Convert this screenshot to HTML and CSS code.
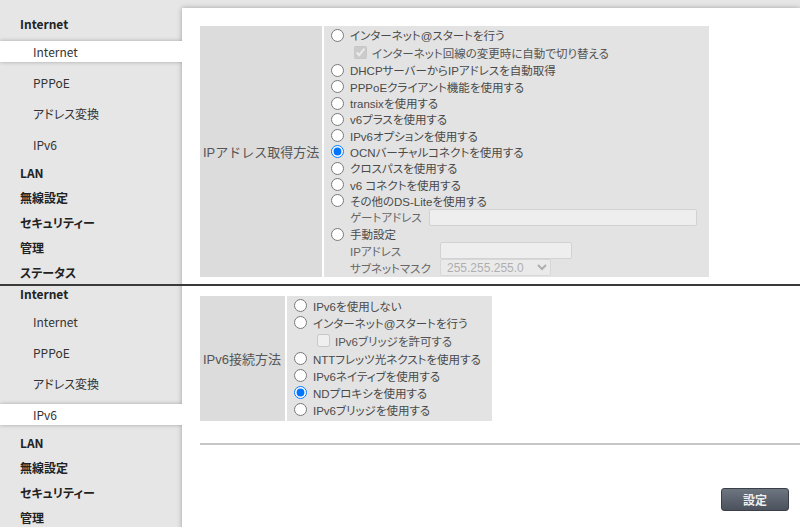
FILE: index.html
```html
<!DOCTYPE html>
<html lang="ja">

<head>
    <meta charset="UTF-8">
    <meta name="viewport" content="width=device-width, initial-scale=1.0">
    <title>Internet 設定</title>
    <link rel="stylesheet" href="styles.css">
</head>

<body>
    <!-- Internet page -->
    <div class="shot shot-top">
        <div class="page">
            <nav class="side">
                <div class="menu-head">Internet</div>
                <ul class="submenu">
                    <li class="active">Internet</li>
                    <li>PPPoE</li>
                    <li>アドレス変換</li>
                    <li>IPv6</li>
                </ul>
                <div class="menu-head">LAN</div>
                <div class="menu-head">無線設定</div>
                <div class="menu-head">セキュリティー</div>
                <div class="menu-head">管理</div>
                <div class="menu-head">ステータス</div>
            </nav>
            <main class="main">
                <div class="form-table">
                    <div class="form-label label-ip">IPアドレス取得方法</div>
                    <div class="form-value value-ip">
                        <label class="opt"><input type="radio" name="ipmode">インターネット@スタートを行う</label>
                        <label class="opt sub"><input type="checkbox" checked disabled>インターネット回線の変更時に自動で切り替える</label>
                        <label class="opt"><input type="radio" name="ipmode">DHCPサーバーからIPアドレスを自動取得</label>
                        <label class="opt"><input type="radio" name="ipmode">PPPoEクライアント機能を使用する</label>
                        <label class="opt"><input type="radio" name="ipmode">transixを使用する</label>
                        <label class="opt"><input type="radio" name="ipmode">v6プラスを使用する</label>
                        <label class="opt"><input type="radio" name="ipmode">IPv6オプションを使用する</label>
                        <label class="opt"><input type="radio" name="ipmode" checked>OCNバーチャルコネクトを使用する</label>
                        <label class="opt"><input type="radio" name="ipmode">クロスパスを使用する</label>
                        <label class="opt"><input type="radio" name="ipmode">v6 コネクトを使用する</label>
                        <label class="opt"><input type="radio" name="ipmode">その他のDS-Liteを使用する</label>
                        <div class="field">
                            <span class="field-name name-gw">ゲートアドレス</span>
                            <input type="text" class="text-box box-gw" disabled>
                        </div>
                        <label class="opt"><input type="radio" name="ipmode">手動設定</label>
                        <div class="field">
                            <span class="field-name">IPアドレス</span>
                            <input type="text" class="text-box box-ip" disabled>
                        </div>
                        <div class="field">
                            <span class="field-name">サブネットマスク</span>
                            <select class="mask-select" disabled>
                                <option>255.255.255.0</option>
                            </select>
                        </div>
                    </div>
                </div>
            </main>
        </div>
    </div>

    <div class="divider"></div>

    <!-- IPv6 page -->
    <div class="shot shot-bottom">
        <div class="page scrolled">
            <nav class="side">
                <div class="menu-head">Internet</div>
                <ul class="submenu">
                    <li>Internet</li>
                    <li>PPPoE</li>
                    <li>アドレス変換</li>
                    <li class="active">IPv6</li>
                </ul>
                <div class="menu-head">LAN</div>
                <div class="menu-head">無線設定</div>
                <div class="menu-head">セキュリティー</div>
                <div class="menu-head">管理</div>
                <div class="menu-head">ステータス</div>
            </nav>
            <main class="main">
                <div class="form-table">
                    <div class="form-label label-v6">IPv6接続方法</div>
                    <div class="form-value value-v6 loose">
                        <label class="opt"><input type="radio" name="v6mode">IPv6を使用しない</label>
                        <label class="opt"><input type="radio" name="v6mode">インターネット@スタートを行う</label>
                        <label class="opt sub"><input type="checkbox" disabled>IPv6ブリッジを許可する</label>
                        <label class="opt"><input type="radio" name="v6mode">NTTフレッツ光ネクストを使用する</label>
                        <label class="opt"><input type="radio" name="v6mode">IPv6ネイティブを使用する</label>
                        <label class="opt"><input type="radio" name="v6mode" checked>NDプロキシを使用する</label>
                        <label class="opt"><input type="radio" name="v6mode">IPv6ブリッジを使用する</label>
                    </div>
                </div>
                <div class="rule"></div>
                <div class="actions">
                    <button class="submit-button">設定</button>
                </div>
            </main>
        </div>
    </div>
</body>

</html>
```

FILE: styles.css
```css
body {
    margin: 0;
    padding: 0;
    background: #fff;
    font-family: "Noto Sans CJK JP", sans-serif;
    font-size: 12px;
    color: #333;
}

.shot {
    overflow: hidden;
}

.shot-top {
    height: 284px;
}

.shot-bottom {
    height: 241px;
}

.divider {
    height: 2px;
    background-color: #3a3a3a;
}

.page {
    display: flex;
    min-height: 560px;
    background-color: #e6e6e6;
}

.page.scrolled {
    margin-top: -16px;
}

/* side menu */

.side {
    width: 182px;
    flex: none;
    padding-top: 12px;
    font-feature-settings: "palt";
}

.menu-head {
    height: 25px;
    line-height: 25px;
    padding-left: 20px;
    font-weight: bold;
    color: #222;
}

.menu-head:first-child {
    height: 24px;
    line-height: 24px;
}

.submenu {
    list-style: none;
    margin: 0;
    padding: 5px 0;
    display: flex;
    flex-direction: column;
    gap: 10px;
}

.submenu li {
    height: 21px;
    line-height: 21px;
    padding-left: 33px;
    color: #333;
}

.submenu li.active {
    position: relative;
    z-index: 1;
    background-color: #fff;
    box-shadow: 0 0 4px rgba(0, 0, 0, 0.28);
    clip-path: inset(-6px 0 -6px 0);
}

/* main area */

.main {
    flex: 1;
    margin-top: 8px;
    padding: 18px 0 0 18px;
    background-color: #fff;
    box-shadow: 0 0 5px rgba(0, 0, 0, 0.3);
}

.form-table {
    display: flex;
    gap: 2px;
}

.form-label {
    display: flex;
    align-items: center;
    padding-left: 3px;
    background-color: #dcdcdc;
    color: #555;
    font-family: "Liberation Sans", "Noto Sans CJK JP", sans-serif;
    font-size: 13px;
    white-space: nowrap;
}

.label-ip {
    width: 119px;
}

.label-v6 {
    width: 82px;
}

.form-value {
    padding: 1px 0 1px 2px;
    background-color: #e3e3e3;
    color: #4a4a4a;
    font-family: "Liberation Sans", "Noto Sans CJK JP", sans-serif;
    font-size: 11.5px;
    font-feature-settings: "palt";
    white-space: nowrap;
}

.value-ip {
    width: 383px;
}

.value-v6 {
    width: 203px;
    padding-bottom: 3px;
}

.opt {
    display: flex;
    align-items: center;
    height: 16.3px;
}

.loose .opt {
    height: 17px;
}

.opt.sub,
.loose .opt.sub {
    height: 19px;
    padding-left: 28px;
    color: #555;
}

.opt input[type="radio"] {
    width: 13px;
    height: 13px;
    margin: 0 6px 0 5px;
}

.opt input[type="checkbox"] {
    width: 13px;
    height: 13px;
    margin: 0 5px 0 0;
}

.field {
    display: flex;
    align-items: center;
    height: 17px;
    padding-left: 24px;
}

.field-name {
    width: 90px;
    color: #666;
}

.field-name.name-gw {
    width: 79px;
}

.text-box {
    box-sizing: border-box;
    height: 17px;
    margin: 0;
    padding: 0 3px;
    border: 1px solid #d2d2d2;
    border-radius: 2px;
    background-color: #eeeeee;
}

.box-gw {
    width: 268px;
}

.box-ip {
    width: 132px;
}

.mask-select {
    box-sizing: border-box;
    width: 111px;
    height: 17px;
    margin: 0;
    padding: 0 2px;
    border: 1px solid #d2d2d2;
    border-radius: 2px;
    background-color: #eeeeee;
    color: #999;
    font-family: "Liberation Sans", sans-serif;
    font-size: 12px;
}

.rule {
    height: 2px;
    margin-top: 22px;
    background-color: #c6c6c6;
}

.actions {
    display: flex;
    justify-content: flex-end;
    margin-top: 43px;
    padding-right: 11px;
}

.submit-button {
    width: 68px;
    height: 23px;
    padding: 0;
    border: 1px solid #3b4048;
    border-radius: 3px;
    background: linear-gradient(#6d7581, #4b525d);
    color: #eee;
    font-family: "Noto Sans CJK JP", sans-serif;
    font-size: 12px;
    font-weight: bold;
    cursor: pointer;
}
```
